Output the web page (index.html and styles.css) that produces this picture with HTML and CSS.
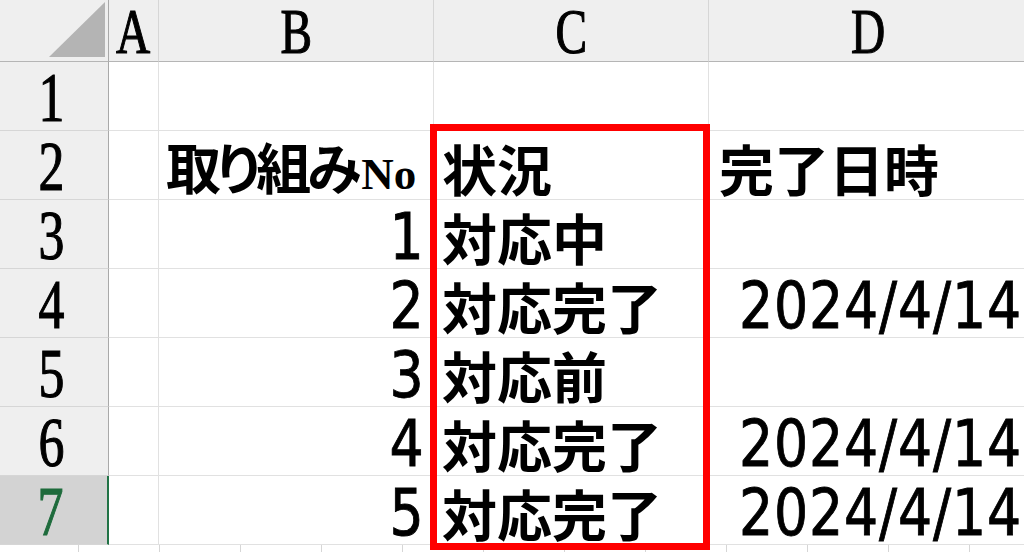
FILE: index.html
```html
<!DOCTYPE html>
<html lang="ja">
<head>
<meta charset="utf-8">
<title>Sheet</title>
<link rel="stylesheet" href="styles.css">
</head>
<body>
<div class="sheet">
  <div class="cell corner"><span class="tri"></span></div>
  <div class="cell colh"><span class="lt">A</span></div>
  <div class="cell colh"><span class="lt">B</span></div>
  <div class="cell colh"><span class="lt">C</span></div>
  <div class="cell colh"><span class="lt">D</span></div>

  <div class="cell rowh"><span class="rn">1</span></div>
  <div class="cell"></div>
  <div class="cell"></div>
  <div class="cell"></div>
  <div class="cell"></div>

  <div class="cell rowh"><span class="rn">2</span></div>
  <div class="cell"></div>
  <div class="cell left padb"><span class="jp prop">取り組み<span class="no">No</span></span></div>
  <div class="cell left padc"><span class="jp">状況</span></div>
  <div class="cell left padd"><span class="jp">完了日時</span></div>

  <div class="cell rowh"><span class="rn">3</span></div>
  <div class="cell"></div>
  <div class="cell right"><span class="num">1</span></div>
  <div class="cell left padc"><span class="jp">対応中</span></div>
  <div class="cell"></div>

  <div class="cell rowh"><span class="rn">4</span></div>
  <div class="cell"></div>
  <div class="cell right"><span class="num">2</span></div>
  <div class="cell left padc"><span class="jp">対応完了</span></div>
  <div class="cell right datec"><span class="num">2024/4/14</span></div>

  <div class="cell rowh"><span class="rn">5</span></div>
  <div class="cell"></div>
  <div class="cell right"><span class="num">3</span></div>
  <div class="cell left padc"><span class="jp">対応前</span></div>
  <div class="cell"></div>

  <div class="cell rowh"><span class="rn">6</span></div>
  <div class="cell"></div>
  <div class="cell right"><span class="num">4</span></div>
  <div class="cell left padc"><span class="jp">対応完了</span></div>
  <div class="cell right datec"><span class="num">2024/4/14</span></div>

  <div class="cell rowh sel"><span class="rn">7</span></div>
  <div class="cell"></div>
  <div class="cell right"><span class="num">5</span></div>
  <div class="cell left padc"><span class="jp">対応完了</span></div>
  <div class="cell right datec"><span class="num">2024/4/14</span></div>

  <div class="tail"></div>

  <div class="highlight"></div>
</div>
</body>
</html>
```

FILE: styles.css
```css
html, body {
  margin: 0;
  padding: 0;
  overflow: hidden;
  background: #ffffff;
}

body {
  width: 1024px;
  height: 552px;
}

.sheet {
  position: relative;
  display: grid;
  grid-template-columns: 109px 50px 275px 275px 320px;
  grid-template-rows: 62px repeat(7, 69px) 1fr;
  width: 1029px;
  height: 552px;
  color: #000;
}

.cell {
  box-sizing: border-box;
  display: flex;
  align-items: center;
  border-right: 1px solid #e1e1e1;
  border-bottom: 1px solid #e1e1e1;
  white-space: nowrap;
}

.corner {
  background: #efefef;
  border-right: 1px solid #a9a9a9;
  border-bottom: 1px solid #b5b5b5;
  justify-content: flex-end;
  align-items: flex-end;
  padding: 0 3px 4px 0;
}

.tri {
  display: block;
  width: 56px;
  height: 55px;
  background: #b4b4b4;
  clip-path: polygon(100% 0, 100% 100%, 0 100%);
}

.colh {
  background: #efefef;
  border-right: 1px solid #d6d6d6;
  border-bottom: 1px solid #b5b5b5;
  justify-content: center;
  padding-top: 2px;
}

.rowh {
  background: #efefef;
  border-right: 1px solid #a9a9a9;
  border-bottom: 1px solid #d6d6d6;
  justify-content: center;
  padding: 4px 6px 0 0;
}

.rowh.sel {
  background: #d3d3d3;
  color: #1e6b3c;
  border-right: 2px solid #217346;
}

.lt {
  display: inline-block;
  font: 400 64px/50px "Liberation Serif", serif;
  -webkit-text-stroke: 1.2px currentColor;
  transform: scaleX(0.74);
}

.rn {
  display: inline-block;
  font: 400 70px/56px "Liberation Serif", serif;
  -webkit-text-stroke: 1.2px currentColor;
  transform: scaleX(0.74);
}

.left {
  justify-content: flex-start;
}

.right {
  justify-content: flex-end;
  padding-right: 9px;
  padding-top: 5px;
}

.datec {
  padding-right: 6px;
}

.padb {
  padding-left: 7px;
  padding-top: 5px;
}

.padc {
  padding-left: 8px;
  padding-top: 5px;
}

.padd {
  padding-left: 10px;
  padding-top: 5px;
}

.jp {
  display: inline-block;
  font: 700 55px/55px "Noto Sans CJK JP", sans-serif;
}

.prop {
  font-feature-settings: "palt" 1;
  letter-spacing: -4px;
}

.no {
  font: 700 45px/45px "Liberation Serif", serif;
  letter-spacing: 0;
  margin-left: 4px;
}

.num {
  display: inline-block;
  font: 400 64px/56px "DejaVu Sans", sans-serif;
  -webkit-text-stroke: 0.9px currentColor;
  transform: scaleX(0.84);
  transform-origin: right center;
}

.datec .num {
  letter-spacing: 1px;
}

.tail {
  grid-column: 1 / -1;
  background-image: linear-gradient(to right, #d6d6d6 0 1px, transparent 1px);
  background-size: 81px 100%;
  background-position: 78px 0;
  background-repeat: repeat-x;
}

.highlight {
  position: absolute;
  left: 430px;
  top: 124px;
  width: 280px;
  height: 426px;
  box-sizing: border-box;
  border: 7px solid #ff0000;
  pointer-events: none;
}
```
